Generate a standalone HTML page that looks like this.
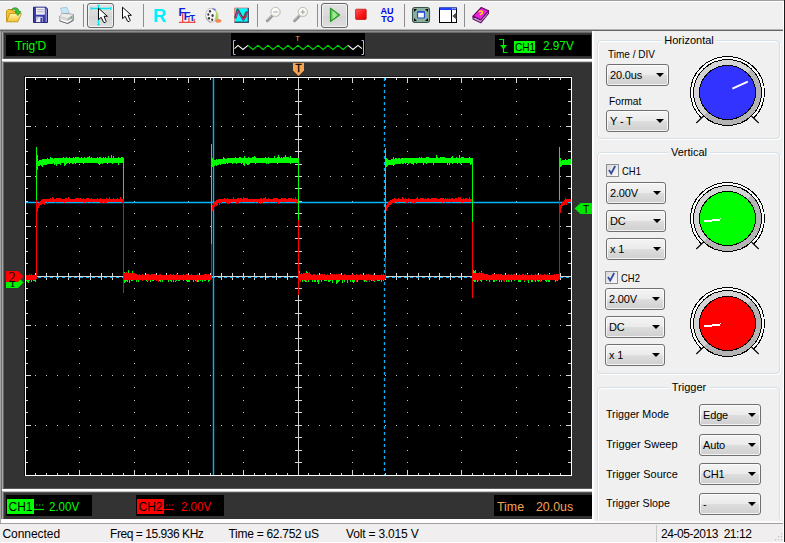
<!DOCTYPE html>
<html><head><meta charset="utf-8"><title>Oscilloscope</title>
<style>
html,body{margin:0;padding:0}
body{width:785px;height:543px;position:relative;overflow:hidden;background:#f0f0f0;font-family:"Liberation Sans", Arial, sans-serif;font-size:11px;color:#000}
div,svg,span,i{position:absolute;box-sizing:content-box}
.lb{white-space:nowrap;transform-origin:0 50%;line-height:14px}
.cb{border:1px solid #707070;border-radius:3px;background:linear-gradient(#f4f4f4 0%,#ebebeb 48%,#dddddd 52%,#cfcfcf 100%);box-shadow:inset 0 0 0 1px rgba(255,255,255,.75)}
.cb span{left:3px;top:0;bottom:0;line-height:20px;font-size:11px;white-space:nowrap}
.cb i{right:4px;top:8px;width:0;height:0;border-left:4px solid transparent;border-right:4px solid transparent;border-top:4px solid #000}
.gb{border:1px solid #d5dfe5;border-radius:4px;box-shadow:inset 1px 1px 0 #fff, 1px 1px 0 #fff}
.gbt{background:#f0f0f0;text-align:center;font-size:11px;line-height:14px;white-space:nowrap}
.bk{background:#000}
.chk{width:11px;height:11px;border:1px solid #8e8f8f;background:linear-gradient(135deg,#d8d8d8,#fafafa)}
.tb{border:1px solid #696969;border-radius:3px;background:linear-gradient(#e2e2e2,#dadada 50%,#d4d4d4 51%,#dedede);box-shadow:inset 0 0 0 1px rgba(255,255,255,.6)}
.sep{width:1px;background:#8d8d8d;top:4px;height:23px}
</style></head><body>

<div style="left:0;top:0;width:785px;height:1px;background:#a0a0a0"></div>
<div style="left:0;top:1px;width:785px;height:1px;background:#fff"></div>
<div class="tb" style="left:87px;top:3px;width:25px;height:23px"></div>
<div class="tb" style="left:321px;top:3px;width:25px;height:23px"></div>
<div class="sep" style="left:83px"></div>
<div class="sep" style="left:143px"></div>
<div class="sep" style="left:257px"></div>
<div class="sep" style="left:317px"></div>
<div class="sep" style="left:404px"></div>
<div class="sep" style="left:464px"></div>
<svg style="left:0;top:0" width="500" height="30" viewBox="0 0 500 30">
<defs>
<linearGradient id="gy" x1="0" y1="0" x2="0" y2="1"><stop offset="0" stop-color="#fff6b0"/><stop offset="1" stop-color="#f0c22c"/></linearGradient>
<linearGradient id="gr" x1="0" y1="0" x2="1" y2="1"><stop offset="0" stop-color="#ff5a5a"/><stop offset=".5" stop-color="#fa1c1c"/><stop offset="1" stop-color="#d80000"/></linearGradient>
<linearGradient id="gg" x1="0" y1="0" x2="1" y2="0"><stop offset="0" stop-color="#48c040"/><stop offset=".4" stop-color="#b0f0a0"/><stop offset="1" stop-color="#50c444"/></linearGradient>
<radialGradient id="gl" cx="0.4" cy="0.35" r="0.7"><stop offset="0" stop-color="#ffffff"/><stop offset=".7" stop-color="#f6f6f4"/><stop offset="1" stop-color="#e0e0dc"/></radialGradient>
</defs>
<path d="M6.500 21.500V11l1.500-1.500h3.500l1.500 1.500h5.500v3.500z" fill="#f1c434" stroke="#b98508" stroke-width=".8" stroke-linejoin="round"/>
<path d="M6.500 21.800l3.300-8.300h11.700l-3.700 8.300z" fill="url(#gy)" stroke="#c08c0a" stroke-width=".8" stroke-linejoin="round"/>
<path d="M11.300 9.800c2.200-3.200 7.200-2.800 7.900 1.800h1.700l-3 4-3-4h1.700c-.5-2.200-3-2.800-5.300-1.800z" fill="#3cc03c" stroke="#1c8c1c" stroke-width=".7" stroke-linejoin="round"/>
<path d="M33.500 7.200h12.300l1.700 1.600v13.700h-14z" fill="#3b3bab" stroke="#22227a" stroke-width="1" stroke-linejoin="round"/>
<path d="M45.600 8v14h1.400V9.200z" fill="#8a8ad8"/>
<rect x="36" y="7.700" width="8.800" height="7" fill="#f0f0f6"/><path d="M37.200 9.700h6.400M37.200 11.800h6.400" stroke="#a8a8b8" stroke-width=".9"/>
<path d="M36 16.800h6.600v5.300h-6.600z" fill="#f4f4fa"/><path d="M36 22.100l4-5.300h-4z" fill="#c4c4dc"/><rect x="40.400" y="17.600" width="1.800" height="4.500" fill="#3b3bab"/>
<path d="M60.600 8.100l6.100-.8 2.700 6-7.300.8z" fill="#c4e6fa" stroke="#8fb4cc" stroke-width=".6"/>
<path d="M59.500 16.300l3.200-3 10.800 1.200v5.800l-5.500 3.200-8.500-2.700z" fill="#b4b4b4" stroke="#7c7c7c" stroke-width=".7" stroke-linejoin="round"/>
<path d="M59.700 16.300l3-2.700 10.600 1.200-5.600 3.400z" fill="#ececec"/>
<path d="M59.700 16.500l8 2v4.600l-8-2.500z" fill="#d8d8d8"/>
<path d="M61.200 19.300l6 1.900 4.300-2.500v1.600l-4.300 2.600-6-2z" fill="#fff"/>
<path d="M59.800 21l8 2.500 5.500-3.200" fill="none" stroke="#6c6c6c" stroke-width=".9"/>
<circle cx="71.300" cy="17.400" r=".8" fill="#3c3"/>
<path d="M91 8.500h20M98.500 5v20" stroke="#00eaf2" stroke-width="1.300"/><path d="M91.200 7v3M110.800 7v3M97 5.300h3M97 24.600h3" stroke="#00eaf2" stroke-width="1.100"/>
<path d="M98.5 8.2V19.6L101.2 17.3L103.5 22.2Q105.2 23.6 106.2 21.5L104.0 16.3H107.4Z" fill="#fff" stroke="#000" stroke-width="0.95" stroke-linejoin="round"/>
<path d="M122.5 7.2V18.6L125.2 16.3L127.5 21.2Q129.2 22.6 130.2 20.5L128.0 15.3H131.4Z" fill="#fff" stroke="#000" stroke-width="0.95" stroke-linejoin="round"/>
<text x="153" y="21.500" font-family='Liberation Sans, Arial, sans-serif' font-weight="bold" font-size="18.500" fill="#00f0ff">R</text>
<g font-family="Liberation Sans, Arial, sans-serif" font-weight="bold" fill="#1020e0"><text x="178.500" y="16" font-size="11.500">F</text><text x="183.800" y="20.400" font-size="11">F</text><text x="189.500" y="21" font-size="9">T</text></g>
<path d="M179 22.300h16.500M182.700 22v-8.600M188.900 22v-4.200M194.200 22v-3" stroke="#f02020" stroke-width="1" fill="none"/>
<ellipse cx="211.300" cy="15.200" rx="5.600" ry="7" fill="#f6f6f6" stroke="#b4b4b4" stroke-width=".9"/><path d="M206.200 17c.5 3 2.500 5 5 5.200" stroke="#9a9a9a" stroke-width=".8" fill="none"/><g fill="#3a3a3a"><ellipse cx="210" cy="11.300" rx="1.100" ry="1.400"/><ellipse cx="208.300" cy="14.500" rx="1" ry="1.300"/><ellipse cx="212.600" cy="15.600" rx="1.100" ry="1.500"/><ellipse cx="209" cy="18.300" rx="1.100" ry="1.400"/><ellipse cx="212.200" cy="19.800" rx="1" ry="1.300"/></g><path d="M212.500 9.200c1.500-.5 2.600 .2 3 1.600" stroke="#7878d8" stroke-width="1.600" fill="none"/><path d="M215.800 10.500c2 1.500 2.800 5 2.300 8.200l-2.600 2-.6-2c1.200-2.600 1.400-5.600 .9-8.200z" fill="#a8d858" stroke="#d8c890" stroke-width=".5"/><path d="M215.200 20.200c1.500-1.600 4.300-1.800 6.300 0 .4 1.300-1 2.300-3 2.500-1.800 .2-3.300-.3-3.300-2.500z" fill="#f08858"/>
<rect x="234.500" y="8" width="14" height="14.300" fill="#00ffff"/><path d="M234.500 22.300V8H248.500" fill="none" stroke="#d88080" stroke-width=".9"/><path d="M248.300 8V22.200H234.500" fill="none" stroke="#3c5070" stroke-width="1.400"/>
<path d="M235.300 18.300L237.700 9.800L243.400 19.600L247 11.500" stroke="#2e5446" stroke-width="2.400" fill="none" stroke-linejoin="round"/><path d="M235.500 18.600L237.700 10.800L243.400 20.200L246.800 12.500" stroke="#ff30c8" stroke-width=".8" fill="none"/><path d="M245.200 12.500V18M243.900 16.300L245.200 18.300L246.500 16.300" stroke="#f01010" stroke-width="1" fill="none"/>
<path d="M271.7 16.300L267.3 20.700" stroke="#989898" stroke-width="3" stroke-linecap="round"/><path d="M271.1 16L267.1 20" stroke="#c4c4c4" stroke-width="1" stroke-linecap="round"/>
<circle cx="275.8" cy="12.300" r="5" fill="#d8d4c4" opacity=".6"/><circle cx="275.5" cy="11.900" r="4.600" fill="url(#gl)" stroke="#c4c0ae" stroke-width="1"/>
<path d="M273.3 12h4.400" stroke="#a4a4a4" stroke-width="1.100"/>
<path d="M299.0 16.300L294.6 20.700" stroke="#989898" stroke-width="3" stroke-linecap="round"/><path d="M298.4 16L294.4 20" stroke="#c4c4c4" stroke-width="1" stroke-linecap="round"/>
<circle cx="303.1" cy="12.300" r="5" fill="#d8d4c4" opacity=".6"/><circle cx="302.8" cy="11.900" r="4.600" fill="url(#gl)" stroke="#c4c0ae" stroke-width="1"/>
<path d="M300.6 12h4.400M302.8 9.800v4.400" stroke="#a4a4a4" stroke-width="1.100"/>
<path d="M330.500 8.300v13.200l9-6.600z" fill="url(#gg)" stroke="#2a9a2a" stroke-width="1.300" stroke-linejoin="round"/>
<rect x="355.600" y="9.200" width="10.600" height="10.300" rx=".8" fill="url(#gr)" stroke="#c41414" stroke-width=".8"/>
<g font-family="Liberation Sans, Arial, sans-serif" font-weight="bold" font-size="9" fill="#0000f0"><text x="380.600" y="13.500">AU</text><text x="381.200" y="22.200" letter-spacing=".2">TO</text></g>
<rect x="412.500" y="7.500" width="17" height="15" rx="2.500" fill="#8cae9e" stroke="#36564a" stroke-width="1.100"/><path d="M414 9h3l-3 3zM428 9h-3l3 3zM414 21h3l-3-3zM428 21h-3l3-3z" fill="#000"/><rect x="417.500" y="11.500" width="7" height="6.500" rx="1" fill="#f4f4ff" stroke="#2050d0" stroke-width="1.200"/><path d="M417.500 12h7" stroke="#2050d0" stroke-width="1.600"/>
<rect x="439.500" y="8" width="17" height="14.500" fill="#fff" stroke="#000" stroke-width="1"/><rect x="439.500" y="7.500" width="17" height="2.500" fill="#2040ff"/><path d="M451.500 10v12" stroke="#000" stroke-width="1"/><path d="M456.500 12.500l-4.200 3.500 4.200 3.500z" fill="#484848"/><path d="M452 8.700h4" stroke="#fff" stroke-width=".8" stroke-dasharray="1 .6"/>
<path d="M473 16.200l8.300-8.700 7.200 3.300-7.700 9.200z" fill="#f020e0" stroke="#5e0a5e" stroke-width="1.100" stroke-linejoin="round"/><path d="M473 16.200v2.900l7.800 3.700 7.700-9.300v-2.700l-7.700 9.200z" fill="#f4ecf8" stroke="#5e0a5e" stroke-width="1.100" stroke-linejoin="round"/><path d="M473.300 17.700l7.500 3.600 7.500-9" fill="none" stroke="#a040c0" stroke-width=".7"/><path d="M478.800 12.300c.6-2 3.800-1.800 3.600 .3-.1 1.100-1.700 1.200-2.300 2.400" stroke="#ffe000" stroke-width="1.500" fill="none"/>
</svg>
<div style="left:0;top:29px;width:783px;height:1px;background:#b4b4b4"></div>
<div style="left:0;top:30px;width:783px;height:1px;background:#646464"></div>
<div style="left:783px;top:1px;width:1px;height:542px;background:#fff"></div>
<div style="left:784px;top:0;width:1px;height:542px;background:#1a1a1a"></div>
<div style="left:0;top:31px;width:592px;height:488px;background:#333"></div>
<div style="left:0;top:31px;width:592px;height:1px;background:#8c8c8c"></div>
<div style="left:0;top:32px;width:592px;height:1px;background:#6a6a6a"></div>
<div style="left:0;top:31px;width:1px;height:492px;background:#a6a6a6"></div>
<div style="left:1px;top:31px;width:1px;height:490px;background:#707070"></div>
<div style="left:2px;top:32px;width:1px;height:488px;background:#a8a8a8"></div>
<div style="left:3px;top:33px;width:1px;height:486px;background:#666"></div>
<div style="left:592px;top:31px;width:2px;height:492px;background:#fff"></div>
<div style="left:3px;top:58px;width:589px;height:1px;background:#5a5a5a"></div>
<div style="left:2px;top:59px;width:591px;height:2px;background:#fff"></div>
<div style="left:3px;top:61px;width:589px;height:1px;background:#c4c4c4"></div>
<div style="left:4px;top:62px;width:588px;height:1px;background:#555"></div>
<div style="left:3px;top:488px;width:589px;height:1px;background:#5a5a5a"></div>
<div style="left:2px;top:489px;width:591px;height:2px;background:#fff"></div>
<div style="left:3px;top:491px;width:589px;height:1px;background:#c4c4c4"></div>
<div style="left:4px;top:492px;width:588px;height:1px;background:#555"></div>
<div class="bk" style="left:6px;top:35px;width:50px;height:21px"></div>
<div class="lb" style="left:15px;top:38.5px;font-size:12px;color:#00ff00;transform:scaleX(1.0);">Trig'D</div>
<div class="bk" style="left:231px;top:33px;width:134px;height:23px"></div>
<div class="bk" style="left:495px;top:35px;width:96px;height:21px"></div>
<div style="left:514px;top:41px;width:21px;height:12px;background:#00ff00"></div>
<div class="lb" style="left:515px;top:40px;font-size:11px;color:#000;transform:scaleX(0.92);">CH1</div>
<div class="lb" style="left:543px;top:39.2px;font-size:12px;color:#00ff00;transform:scaleX(0.98);">2.97V</div>
<div class="bk" style="left:6px;top:495px;width:86px;height:21px"></div>
<div style="left:7px;top:499px;width:27px;height:15px;background:#00ff00"></div>
<div class="lb" style="left:8.5px;top:499.5px;font-size:12px;color:#000;transform:scaleX(1.0);">CH1</div>
<div class="lb" style="left:48.5px;top:499.5px;font-size:12px;color:#00ff00;transform:scaleX(0.96);">2.00V</div>
<div class="bk" style="left:136px;top:495px;width:88px;height:21px"></div>
<div style="left:137px;top:499px;width:27px;height:15px;background:#ff0000"></div>
<div class="lb" style="left:138.5px;top:499.5px;font-size:12px;color:#000;transform:scaleX(1.0);">CH2</div>
<div class="lb" style="left:181px;top:499.5px;font-size:12px;color:#ff0000;transform:scaleX(0.96);">2.00V</div>
<div class="bk" style="left:494px;top:495px;width:98px;height:21px"></div>
<div class="lb" style="left:496.7px;top:499.5px;font-size:12px;color:#f5a452;transform:scaleX(1.03);">Time</div>
<div class="lb" style="left:536px;top:499.5px;font-size:12px;color:#f5a452;transform:scaleX(1.03);">20.0us</div>
<svg style="left:0;top:0" width="600" height="543" viewBox="0 0 600 543">
<rect x="25" y="77" width="547" height="399" fill="#000"/>
<path d="M35 126.5h1M35 176.5h1M35 226.5h1M35 325.5h1M35 375.5h1M35 425.5h1M46 126.5h1M46 176.5h1M46 226.5h1M46 325.5h1M46 375.5h1M46 425.5h1M57 126.5h1M57 176.5h1M57 226.5h1M57 325.5h1M57 375.5h1M57 425.5h1M68 126.5h1M68 176.5h1M68 226.5h1M68 325.5h1M68 375.5h1M68 425.5h1M79 89.5h1M79 101.5h1M79 114.5h1M79 126.5h1M79 139.5h1M79 151.5h1M79 164.5h1M79 176.5h1M79 188.5h1M79 201.5h1M79 213.5h1M79 226.5h1M79 238.5h1M79 251.5h1M79 263.5h1M79 276.5h1M79 288.5h1M79 300.5h1M79 313.5h1M79 325.5h1M79 338.5h1M79 350.5h1M79 363.5h1M79 375.5h1M79 387.5h1M79 400.5h1M79 412.5h1M79 425.5h1M79 437.5h1M79 450.5h1M79 462.5h1M90 126.5h1M90 176.5h1M90 226.5h1M90 325.5h1M90 375.5h1M90 425.5h1M101 126.5h1M101 176.5h1M101 226.5h1M101 325.5h1M101 375.5h1M101 425.5h1M112 126.5h1M112 176.5h1M112 226.5h1M112 325.5h1M112 375.5h1M112 425.5h1M123 126.5h1M123 176.5h1M123 226.5h1M123 325.5h1M123 375.5h1M123 425.5h1M134 89.5h1M134 101.5h1M134 114.5h1M134 126.5h1M134 139.5h1M134 151.5h1M134 164.5h1M134 176.5h1M134 188.5h1M134 201.5h1M134 213.5h1M134 226.5h1M134 238.5h1M134 251.5h1M134 263.5h1M134 276.5h1M134 288.5h1M134 300.5h1M134 313.5h1M134 325.5h1M134 338.5h1M134 350.5h1M134 363.5h1M134 375.5h1M134 387.5h1M134 400.5h1M134 412.5h1M134 425.5h1M134 437.5h1M134 450.5h1M134 462.5h1M145 126.5h1M145 176.5h1M145 226.5h1M145 325.5h1M145 375.5h1M145 425.5h1M156 126.5h1M156 176.5h1M156 226.5h1M156 325.5h1M156 375.5h1M156 425.5h1M166 126.5h1M166 176.5h1M166 226.5h1M166 325.5h1M166 375.5h1M166 425.5h1M177 126.5h1M177 176.5h1M177 226.5h1M177 325.5h1M177 375.5h1M177 425.5h1M188 89.5h1M188 101.5h1M188 114.5h1M188 126.5h1M188 139.5h1M188 151.5h1M188 164.5h1M188 176.5h1M188 188.5h1M188 201.5h1M188 213.5h1M188 226.5h1M188 238.5h1M188 251.5h1M188 263.5h1M188 276.5h1M188 288.5h1M188 300.5h1M188 313.5h1M188 325.5h1M188 338.5h1M188 350.5h1M188 363.5h1M188 375.5h1M188 387.5h1M188 400.5h1M188 412.5h1M188 425.5h1M188 437.5h1M188 450.5h1M188 462.5h1M199 126.5h1M199 176.5h1M199 226.5h1M199 325.5h1M199 375.5h1M199 425.5h1M210 126.5h1M210 176.5h1M210 226.5h1M210 325.5h1M210 375.5h1M210 425.5h1M221 126.5h1M221 176.5h1M221 226.5h1M221 325.5h1M221 375.5h1M221 425.5h1M232 126.5h1M232 176.5h1M232 226.5h1M232 325.5h1M232 375.5h1M232 425.5h1M243 89.5h1M243 101.5h1M243 114.5h1M243 126.5h1M243 139.5h1M243 151.5h1M243 164.5h1M243 176.5h1M243 188.5h1M243 201.5h1M243 213.5h1M243 226.5h1M243 238.5h1M243 251.5h1M243 263.5h1M243 276.5h1M243 288.5h1M243 300.5h1M243 313.5h1M243 325.5h1M243 338.5h1M243 350.5h1M243 363.5h1M243 375.5h1M243 387.5h1M243 400.5h1M243 412.5h1M243 425.5h1M243 437.5h1M243 450.5h1M243 462.5h1M254 126.5h1M254 176.5h1M254 226.5h1M254 325.5h1M254 375.5h1M254 425.5h1M265 126.5h1M265 176.5h1M265 226.5h1M265 325.5h1M265 375.5h1M265 425.5h1M276 126.5h1M276 176.5h1M276 226.5h1M276 325.5h1M276 375.5h1M276 425.5h1M287 126.5h1M287 176.5h1M287 226.5h1M287 325.5h1M287 375.5h1M287 425.5h1M298 126.5h1M298 176.5h1M298 226.5h1M298 325.5h1M298 375.5h1M298 425.5h1M308 126.5h1M308 176.5h1M308 226.5h1M308 325.5h1M308 375.5h1M308 425.5h1M319 126.5h1M319 176.5h1M319 226.5h1M319 325.5h1M319 375.5h1M319 425.5h1M330 126.5h1M330 176.5h1M330 226.5h1M330 325.5h1M330 375.5h1M330 425.5h1M341 126.5h1M341 176.5h1M341 226.5h1M341 325.5h1M341 375.5h1M341 425.5h1M352 89.5h1M352 101.5h1M352 114.5h1M352 126.5h1M352 139.5h1M352 151.5h1M352 164.5h1M352 176.5h1M352 188.5h1M352 201.5h1M352 213.5h1M352 226.5h1M352 238.5h1M352 251.5h1M352 263.5h1M352 276.5h1M352 288.5h1M352 300.5h1M352 313.5h1M352 325.5h1M352 338.5h1M352 350.5h1M352 363.5h1M352 375.5h1M352 387.5h1M352 400.5h1M352 412.5h1M352 425.5h1M352 437.5h1M352 450.5h1M352 462.5h1M363 126.5h1M363 176.5h1M363 226.5h1M363 325.5h1M363 375.5h1M363 425.5h1M374 126.5h1M374 176.5h1M374 226.5h1M374 325.5h1M374 375.5h1M374 425.5h1M385 126.5h1M385 176.5h1M385 226.5h1M385 325.5h1M385 375.5h1M385 425.5h1M396 126.5h1M396 176.5h1M396 226.5h1M396 325.5h1M396 375.5h1M396 425.5h1M407 89.5h1M407 101.5h1M407 114.5h1M407 126.5h1M407 139.5h1M407 151.5h1M407 164.5h1M407 176.5h1M407 188.5h1M407 201.5h1M407 213.5h1M407 226.5h1M407 238.5h1M407 251.5h1M407 263.5h1M407 276.5h1M407 288.5h1M407 300.5h1M407 313.5h1M407 325.5h1M407 338.5h1M407 350.5h1M407 363.5h1M407 375.5h1M407 387.5h1M407 400.5h1M407 412.5h1M407 425.5h1M407 437.5h1M407 450.5h1M407 462.5h1M418 126.5h1M418 176.5h1M418 226.5h1M418 325.5h1M418 375.5h1M418 425.5h1M429 126.5h1M429 176.5h1M429 226.5h1M429 325.5h1M429 375.5h1M429 425.5h1M439 126.5h1M439 176.5h1M439 226.5h1M439 325.5h1M439 375.5h1M439 425.5h1M450 126.5h1M450 176.5h1M450 226.5h1M450 325.5h1M450 375.5h1M450 425.5h1M461 89.5h1M461 101.5h1M461 114.5h1M461 126.5h1M461 139.5h1M461 151.5h1M461 164.5h1M461 176.5h1M461 188.5h1M461 201.5h1M461 213.5h1M461 226.5h1M461 238.5h1M461 251.5h1M461 263.5h1M461 276.5h1M461 288.5h1M461 300.5h1M461 313.5h1M461 325.5h1M461 338.5h1M461 350.5h1M461 363.5h1M461 375.5h1M461 387.5h1M461 400.5h1M461 412.5h1M461 425.5h1M461 437.5h1M461 450.5h1M461 462.5h1M472 126.5h1M472 176.5h1M472 226.5h1M472 325.5h1M472 375.5h1M472 425.5h1M483 126.5h1M483 176.5h1M483 226.5h1M483 325.5h1M483 375.5h1M483 425.5h1M494 126.5h1M494 176.5h1M494 226.5h1M494 325.5h1M494 375.5h1M494 425.5h1M505 126.5h1M505 176.5h1M505 226.5h1M505 325.5h1M505 375.5h1M505 425.5h1M516 89.5h1M516 101.5h1M516 114.5h1M516 126.5h1M516 139.5h1M516 151.5h1M516 164.5h1M516 176.5h1M516 188.5h1M516 201.5h1M516 213.5h1M516 226.5h1M516 238.5h1M516 251.5h1M516 263.5h1M516 276.5h1M516 288.5h1M516 300.5h1M516 313.5h1M516 325.5h1M516 338.5h1M516 350.5h1M516 363.5h1M516 375.5h1M516 387.5h1M516 400.5h1M516 412.5h1M516 425.5h1M516 437.5h1M516 450.5h1M516 462.5h1M527 126.5h1M527 176.5h1M527 226.5h1M527 325.5h1M527 375.5h1M527 425.5h1M538 126.5h1M538 176.5h1M538 226.5h1M538 325.5h1M538 375.5h1M538 425.5h1M549 126.5h1M549 176.5h1M549 226.5h1M549 325.5h1M549 375.5h1M549 425.5h1M560 126.5h1M560 176.5h1M560 226.5h1M560 325.5h1M560 375.5h1M560 425.5h1" stroke="#c4c4c4" stroke-width="1" fill="none" shape-rendering="crispEdges"/>
<path d="M35.5 78v2M35.5 475v-2M46.5 78v2M46.5 475v-2M57.5 78v2M57.5 475v-2M68.5 78v2M68.5 475v-2M79.5 78v5M79.5 475v-5M90.5 78v2M90.5 475v-2M101.5 78v2M101.5 475v-2M112.5 78v2M112.5 475v-2M123.5 78v2M123.5 475v-2M134.5 78v5M134.5 475v-5M145.5 78v2M145.5 475v-2M156.5 78v2M156.5 475v-2M166.5 78v2M166.5 475v-2M177.5 78v2M177.5 475v-2M188.5 78v5M188.5 475v-5M199.5 78v2M199.5 475v-2M210.5 78v2M210.5 475v-2M221.5 78v2M221.5 475v-2M232.5 78v2M232.5 475v-2M243.5 78v5M243.5 475v-5M254.5 78v2M254.5 475v-2M265.5 78v2M265.5 475v-2M276.5 78v2M276.5 475v-2M287.5 78v2M287.5 475v-2M298.5 78v5M298.5 475v-5M308.5 78v2M308.5 475v-2M319.5 78v2M319.5 475v-2M330.5 78v2M330.5 475v-2M341.5 78v2M341.5 475v-2M352.5 78v5M352.5 475v-5M363.5 78v2M363.5 475v-2M374.5 78v2M374.5 475v-2M385.5 78v2M385.5 475v-2M396.5 78v2M396.5 475v-2M407.5 78v5M407.5 475v-5M418.5 78v2M418.5 475v-2M429.5 78v2M429.5 475v-2M439.5 78v2M439.5 475v-2M450.5 78v2M450.5 475v-2M461.5 78v5M461.5 475v-5M472.5 78v2M472.5 475v-2M483.5 78v2M483.5 475v-2M494.5 78v2M494.5 475v-2M505.5 78v2M505.5 475v-2M516.5 78v5M516.5 475v-5M527.5 78v2M527.5 475v-2M538.5 78v2M538.5 475v-2M549.5 78v2M549.5 475v-2M560.5 78v2M560.5 475v-2M26 89.5h2M571 89.5h-3M26 101.5h2M571 101.5h-3M26 114.5h2M571 114.5h-3M26 126.5h5M571 126.5h-5M26 139.5h2M571 139.5h-3M26 151.5h2M571 151.5h-3M26 164.5h2M571 164.5h-3M26 176.5h5M571 176.5h-5M26 188.5h2M571 188.5h-3M26 201.5h2M571 201.5h-3M26 213.5h2M571 213.5h-3M26 226.5h5M571 226.5h-5M26 238.5h2M571 238.5h-3M26 251.5h2M571 251.5h-3M26 263.5h2M571 263.5h-3M26 276.5h5M571 276.5h-5M26 288.5h2M571 288.5h-3M26 300.5h2M571 300.5h-3M26 313.5h2M571 313.5h-3M26 325.5h5M571 325.5h-5M26 338.5h2M571 338.5h-3M26 350.5h2M571 350.5h-3M26 363.5h2M571 363.5h-3M26 375.5h5M571 375.5h-5M26 387.5h2M571 387.5h-3M26 400.5h2M571 400.5h-3M26 412.5h2M571 412.5h-3M26 425.5h5M571 425.5h-5M26 437.5h2M571 437.5h-3M26 450.5h2M571 450.5h-3M26 462.5h2M571 462.5h-3M298.5 77V475M25 276.5H571M35.5 273v7M46.5 273v7M57.5 273v7M68.5 273v7M79.5 273v7M90.5 273v7M101.5 273v7M112.5 273v7M123.5 273v7M134.5 273v7M145.5 273v7M156.5 273v7M166.5 273v7M177.5 273v7M188.5 273v7M199.5 273v7M210.5 273v7M221.5 273v7M232.5 273v7M243.5 273v7M254.5 273v7M265.5 273v7M276.5 273v7M287.5 273v7M298.5 273v7M308.5 273v7M319.5 273v7M330.5 273v7M341.5 273v7M352.5 273v7M363.5 273v7M374.5 273v7M385.5 273v7M396.5 273v7M407.5 273v7M418.5 273v7M429.5 273v7M439.5 273v7M450.5 273v7M461.5 273v7M472.5 273v7M483.5 273v7M494.5 273v7M505.5 273v7M516.5 273v7M527.5 273v7M538.5 273v7M549.5 273v7M560.5 273v7M295 89.5h7M295 101.5h7M295 114.5h7M295 126.5h7M295 139.5h7M295 151.5h7M295 164.5h7M295 176.5h7M295 188.5h7M295 201.5h7M295 213.5h7M295 226.5h7M295 238.5h7M295 251.5h7M295 263.5h7M295 276.5h7M295 288.5h7M295 300.5h7M295 313.5h7M295 325.5h7M295 338.5h7M295 350.5h7M295 363.5h7M295 375.5h7M295 387.5h7M295 400.5h7M295 412.5h7M295 425.5h7M295 437.5h7M295 450.5h7M295 462.5h7" stroke="#d4d4d4" stroke-width="1" fill="none" shape-rendering="crispEdges"/>
<path d="M24.5 476V76.5H572" fill="none" stroke="#111" stroke-width="1" shape-rendering="crispEdges"/>
<rect x="25.5" y="77.5" width="546" height="398" fill="none" stroke="#fff" stroke-width="1" shape-rendering="crispEdges"/>
<path d="M26 202.500H571" stroke="#08b4fc" stroke-width="1.400"/>
<path d="M213.500 78V475" stroke="#08b4fc" stroke-width="1.400"/>
<path d="M26 277.500H571" stroke="#08b4fc" stroke-width="1.200" stroke-dasharray="3 3"/>
<path d="M384.500 78V475" stroke="#08b4fc" stroke-width="1.300" stroke-dasharray="3 3"/>
<path d="M26.5 276V281M27.5 276V282M28.5 276V283M29.5 276V281M30.5 276V279M31.5 276V282M32.5 276V279M33.5 276V281M34.5 276V281M35.5 276V282M36.5 147V279M37.5 155V170M38.5 161V166M39.5 160V166M40.5 160V165M41.5 160V166M42.5 159V167M43.5 159V165M44.5 159V165M45.5 159V165M46.5 159V165M47.5 158V164M48.5 159V164M49.5 159V164M50.5 157V164M51.5 158V164M52.5 158V164M53.5 159V163M54.5 158V165M55.5 158V164M56.5 158V166M57.5 158V164M58.5 158V164M59.5 158V164M60.5 158V165M61.5 158V163M62.5 158V163M63.5 157V163M64.5 158V166M65.5 158V165M66.5 157V164M67.5 158V163M68.5 158V163M69.5 157V164M70.5 158V163M71.5 158V163M72.5 158V164M73.5 157V164M74.5 158V163M75.5 157V164M76.5 157V163M77.5 157V163M78.5 157V163M79.5 158V163M80.5 158V163M81.5 157V163M82.5 158V163M83.5 158V164M84.5 157V163M85.5 158V163M86.5 158V163M87.5 157V163M88.5 157V163M89.5 156V163M90.5 158V163M91.5 157V163M92.5 158V163M93.5 158V163M94.5 158V163M95.5 158V163M96.5 158V163M97.5 157V163M98.5 158V164M99.5 157V165M100.5 157V164M101.5 158V163M102.5 158V164M103.5 157V163M104.5 158V163M105.5 157V163M106.5 158V163M107.5 158V164M108.5 156V163M109.5 158V163M110.5 158V163M111.5 155V163M112.5 158V164M113.5 156V163M114.5 158V163M115.5 158V163M116.5 158V163M117.5 158V163M118.5 157V165M119.5 158V163M120.5 158V163M121.5 157V163M122.5 157V163M123.5 158V280M124.5 272V283M125.5 276V282M126.5 276V281M127.5 276V282M128.5 270V279M129.5 276V283M130.5 276V279M131.5 276V281M132.5 271V281M133.5 276V279M134.5 276V279M135.5 276V279M136.5 276V282M137.5 276V279M138.5 276V282M139.5 276V279M140.5 276V279M141.5 276V279M142.5 276V279M143.5 276V279M144.5 276V279M145.5 276V279M146.5 276V281M147.5 276V282M148.5 276V279M149.5 276V279M150.5 276V282M151.5 276V279M152.5 276V281M153.5 276V281M154.5 276V279M155.5 276V279M156.5 276V279M157.5 276V279M158.5 276V279M159.5 276V281M160.5 276V282M161.5 276V280M162.5 276V282M163.5 276V279M164.5 276V279M165.5 276V279M166.5 276V279M167.5 276V279M168.5 276V282M169.5 276V279M170.5 276V281M171.5 276V282M172.5 276V279M173.5 276V282M174.5 276V279M175.5 276V282M176.5 276V281M177.5 276V279M178.5 276V281M179.5 276V281M180.5 276V279M181.5 276V279M182.5 276V279M183.5 276V281M184.5 276V279M185.5 276V279M186.5 276V281M187.5 276V282M188.5 276V282M189.5 276V282M190.5 276V279M191.5 276V279M192.5 276V279M193.5 276V282M194.5 276V279M195.5 276V281M196.5 276V282M197.5 276V282M198.5 276V282M199.5 276V279M200.5 276V281M201.5 276V279M202.5 276V282M203.5 276V279M204.5 276V281M205.5 276V281M206.5 276V279M207.5 276V279M208.5 276V282M209.5 276V281M210.5 276V279M211.5 144V279M212.5 158V167M213.5 160V167M214.5 160V166M215.5 160V165M216.5 159V166M217.5 160V165M218.5 159V165M219.5 159V164M220.5 159V165M221.5 159V164M222.5 159V164M223.5 157V164M224.5 158V164M225.5 159V164M226.5 159V163M227.5 158V164M228.5 158V163M229.5 158V163M230.5 158V163M231.5 158V163M232.5 158V164M233.5 158V163M234.5 158V163M235.5 157V163M236.5 158V164M237.5 158V163M238.5 158V163M239.5 157V163M240.5 157V163M241.5 158V164M242.5 158V163M243.5 158V165M244.5 156V166M245.5 158V163M246.5 158V164M247.5 158V165M248.5 157V165M249.5 158V164M250.5 158V163M251.5 158V163M252.5 157V163M253.5 157V163M254.5 156V163M255.5 157V164M256.5 158V163M257.5 158V163M258.5 158V163M259.5 158V163M260.5 158V163M261.5 158V163M262.5 158V163M263.5 158V163M264.5 158V163M265.5 157V163M266.5 158V164M267.5 158V163M268.5 157V164M269.5 158V163M270.5 158V163M271.5 158V163M272.5 158V163M273.5 158V163M274.5 156V163M275.5 158V163M276.5 158V163M277.5 157V164M278.5 155V163M279.5 157V163M280.5 158V163M281.5 157V163M282.5 158V163M283.5 157V163M284.5 157V163M285.5 155V163M286.5 157V163M287.5 157V163M288.5 157V163M289.5 158V163M290.5 156V164M291.5 158V163M292.5 158V163M293.5 158V163M294.5 158V163M295.5 158V163M296.5 158V163M297.5 158V163M298.5 158V280M299.5 271V279M300.5 276V282M301.5 276V279M302.5 276V282M303.5 276V279M304.5 276V281M305.5 276V282M306.5 271V282M307.5 272V279M308.5 276V282M309.5 276V279M310.5 276V279M311.5 276V279M312.5 276V282M313.5 276V279M314.5 276V282M315.5 276V282M316.5 276V279M317.5 276V282M318.5 276V284M319.5 276V282M320.5 276V279M321.5 276V282M322.5 276V279M323.5 276V279M324.5 276V281M325.5 276V281M326.5 276V281M327.5 276V279M328.5 276V282M329.5 276V282M330.5 276V281M331.5 276V279M332.5 276V283M333.5 276V279M334.5 276V279M335.5 276V279M336.5 276V284M337.5 276V283M338.5 276V282M339.5 276V281M340.5 276V279M341.5 276V279M342.5 276V283M343.5 276V279M344.5 276V282M345.5 276V279M346.5 276V279M347.5 276V283M348.5 276V279M349.5 276V279M350.5 276V282M351.5 276V279M352.5 276V282M353.5 276V283M354.5 276V282M355.5 276V279M356.5 276V279M357.5 276V282M358.5 276V279M359.5 276V279M360.5 276V279M361.5 276V279M362.5 276V279M363.5 276V281M364.5 276V282M365.5 276V281M366.5 276V282M367.5 276V279M368.5 276V279M369.5 276V282M370.5 276V279M371.5 276V281M372.5 276V279M373.5 276V281M374.5 276V282M375.5 276V279M376.5 276V279M377.5 276V281M378.5 276V281M379.5 276V281M380.5 276V279M381.5 276V282M382.5 276V279M383.5 276V281M384.5 276V279M385.5 148V279M386.5 158V167M387.5 159V166M388.5 160V165M389.5 160V165M390.5 160V165M391.5 159V165M392.5 159V165M393.5 157V166M394.5 159V165M395.5 158V164M396.5 158V164M397.5 159V164M398.5 158V164M399.5 158V164M400.5 159V164M401.5 158V163M402.5 158V164M403.5 158V164M404.5 158V163M405.5 158V164M406.5 158V163M407.5 158V163M408.5 158V164M409.5 158V163M410.5 158V163M411.5 158V164M412.5 158V164M413.5 158V165M414.5 158V163M415.5 158V163M416.5 158V164M417.5 158V163M418.5 158V163M419.5 157V163M420.5 158V163M421.5 157V163M422.5 158V163M423.5 158V165M424.5 158V163M425.5 158V163M426.5 157V164M427.5 157V163M428.5 157V163M429.5 158V163M430.5 158V163M431.5 158V163M432.5 158V163M433.5 158V165M434.5 158V163M435.5 158V163M436.5 155V163M437.5 157V163M438.5 158V163M439.5 158V163M440.5 157V163M441.5 157V163M442.5 157V163M443.5 157V163M444.5 157V163M445.5 158V163M446.5 158V163M447.5 158V165M448.5 158V163M449.5 158V165M450.5 158V163M451.5 157V163M452.5 156V164M453.5 158V163M454.5 158V163M455.5 158V163M456.5 157V163M457.5 158V164M458.5 158V163M459.5 155V163M460.5 158V164M461.5 157V163M462.5 157V163M463.5 157V163M464.5 158V163M465.5 158V163M466.5 158V163M467.5 158V163M468.5 158V163M469.5 157V163M470.5 158V165M471.5 158V164M472.5 158V280M473.5 270V281M474.5 271V282M475.5 270V282M476.5 276V279M477.5 276V282M478.5 276V279M479.5 276V280M480.5 276V281M481.5 271V282M482.5 276V279M483.5 276V279M484.5 276V279M485.5 276V279M486.5 276V281M487.5 276V279M488.5 276V279M489.5 276V282M490.5 276V279M491.5 276V279M492.5 276V279M493.5 276V282M494.5 276V282M495.5 276V279M496.5 276V281M497.5 276V279M498.5 276V279M499.5 276V282M500.5 276V279M501.5 276V282M502.5 276V279M503.5 276V281M504.5 276V279M505.5 276V279M506.5 276V282M507.5 276V279M508.5 276V282M509.5 276V279M510.5 276V279M511.5 276V282M512.5 276V279M513.5 276V279M514.5 276V281M515.5 276V279M516.5 276V279M517.5 276V279M518.5 276V282M519.5 276V282M520.5 276V282M521.5 276V280M522.5 276V279M523.5 276V279M524.5 276V282M525.5 276V279M526.5 276V279M527.5 276V281M528.5 276V283M529.5 276V279M530.5 276V279M531.5 276V282M532.5 276V282M533.5 276V279M534.5 276V279M535.5 276V282M536.5 276V279M537.5 276V281M538.5 276V282M539.5 276V281M540.5 276V279M541.5 276V281M542.5 276V279M543.5 276V279M544.5 276V279M545.5 276V281M546.5 276V282M547.5 276V281M548.5 276V282M549.5 276V282M550.5 276V279M551.5 276V279M552.5 276V279M553.5 276V279M554.5 276V279M555.5 276V282M556.5 276V279M557.5 276V281M558.5 276V279M559.5 147V279M560.5 158V167M561.5 161V166M562.5 160V165M563.5 160V165M564.5 160V165M565.5 159V165M566.5 160V165M567.5 160V165M568.5 159V165M569.5 159V165M570.5 159V164" stroke="#00ff00" stroke-width="1" fill="none" shape-rendering="crispEdges"/>
<path d="M26.5 275V280M27.5 275V280M28.5 275V280M29.5 274V280M30.5 275V280M31.5 274V280M32.5 275V280M33.5 275V280M34.5 275V280M35.5 275V280M36.5 200V279M37.5 205V212M38.5 203V208M39.5 202V206M40.5 201V205M41.5 200V205M42.5 199V204M43.5 199V204M44.5 199V205M45.5 199V202M46.5 199V202M47.5 199V204M48.5 199V202M49.5 199V202M50.5 198V202M51.5 199V202M52.5 197V202M53.5 198V202M54.5 199V202M55.5 199V203M56.5 198V202M57.5 198V204M58.5 198V202M59.5 198V202M60.5 198V202M61.5 199V202M62.5 199V202M63.5 199V202M64.5 199V203M65.5 198V202M66.5 198V202M67.5 199V202M68.5 197V202M69.5 198V202M70.5 199V202M71.5 199V202M72.5 199V202M73.5 199V202M74.5 199V202M75.5 198V202M76.5 198V202M77.5 198V202M78.5 198V202M79.5 199V202M80.5 198V202M81.5 199V202M82.5 199V202M83.5 198V202M84.5 199V203M85.5 199V202M86.5 198V202M87.5 198V203M88.5 198V202M89.5 199V202M90.5 199V202M91.5 198V203M92.5 199V202M93.5 199V202M94.5 199V202M95.5 199V202M96.5 199V202M97.5 198V202M98.5 199V202M99.5 199V202M100.5 198V203M101.5 199V203M102.5 199V203M103.5 199V202M104.5 199V203M105.5 199V203M106.5 198V203M107.5 199V202M108.5 199V202M109.5 197V202M110.5 199V202M111.5 199V202M112.5 199V202M113.5 198V202M114.5 199V202M115.5 199V202M116.5 199V202M117.5 198V202M118.5 199V202M119.5 199V202M120.5 197V202M121.5 199V202M122.5 199V203M123.5 199V293M124.5 273V280M125.5 273V280M126.5 272V280M127.5 273V280M128.5 273V280M129.5 273V280M130.5 273V280M131.5 273V280M132.5 273V280M133.5 273V280M134.5 273V280M135.5 274V280M136.5 274V280M137.5 275V280M138.5 275V280M139.5 274V280M140.5 275V280M141.5 275V280M142.5 274V281M143.5 275V280M144.5 275V280M145.5 275V280M146.5 274V280M147.5 274V281M148.5 274V281M149.5 275V280M150.5 275V280M151.5 274V280M152.5 274V280M153.5 274V280M154.5 274V280M155.5 274V280M156.5 275V281M157.5 275V280M158.5 275V282M159.5 274V280M160.5 274V280M161.5 275V280M162.5 275V280M163.5 275V280M164.5 275V280M165.5 275V280M166.5 275V280M167.5 275V280M168.5 275V280M169.5 275V280M170.5 274V280M171.5 275V280M172.5 275V280M173.5 274V280M174.5 275V280M175.5 275V281M176.5 274V280M177.5 274V280M178.5 275V280M179.5 275V280M180.5 275V280M181.5 275V280M182.5 275V280M183.5 274V280M184.5 275V280M185.5 275V280M186.5 274V280M187.5 274V280M188.5 275V280M189.5 275V280M190.5 275V280M191.5 274V280M192.5 275V280M193.5 275V280M194.5 275V280M195.5 275V280M196.5 275V282M197.5 274V280M198.5 275V280M199.5 275V280M200.5 275V280M201.5 275V280M202.5 275V280M203.5 275V280M204.5 274V280M205.5 274V280M206.5 274V280M207.5 275V280M208.5 274V280M209.5 275V280M210.5 275V280M211.5 244V279M212.5 205V211M213.5 203V210M214.5 202V207M215.5 201V205M216.5 200V206M217.5 200V205M218.5 199V203M219.5 199V205M220.5 199V203M221.5 199V204M222.5 199V202M223.5 199V202M224.5 198V202M225.5 199V202M226.5 199V203M227.5 198V204M228.5 199V204M229.5 199V202M230.5 199V203M231.5 199V202M232.5 199V202M233.5 197V202M234.5 199V202M235.5 199V202M236.5 199V204M237.5 198V203M238.5 198V203M239.5 199V202M240.5 198V202M241.5 198V203M242.5 199V202M243.5 197V202M244.5 198V202M245.5 198V202M246.5 198V202M247.5 198V202M248.5 199V202M249.5 199V202M250.5 199V202M251.5 199V202M252.5 199V202M253.5 199V202M254.5 199V202M255.5 199V203M256.5 199V202M257.5 199V202M258.5 199V203M259.5 199V202M260.5 198V204M261.5 198V202M262.5 199V203M263.5 198V202M264.5 198V202M265.5 197V202M266.5 199V202M267.5 199V202M268.5 198V202M269.5 199V203M270.5 199V202M271.5 199V202M272.5 199V202M273.5 198V202M274.5 198V202M275.5 198V203M276.5 198V202M277.5 198V203M278.5 199V204M279.5 199V202M280.5 199V202M281.5 198V202M282.5 198V202M283.5 199V204M284.5 198V202M285.5 198V202M286.5 199V202M287.5 199V202M288.5 198V202M289.5 198V202M290.5 198V202M291.5 198V202M292.5 199V202M293.5 198V202M294.5 199V202M295.5 197V202M296.5 199V203M297.5 199V202M298.5 220V295M299.5 273V280M300.5 274V282M301.5 273V280M302.5 274V280M303.5 273V280M304.5 273V280M305.5 273V280M306.5 273V281M307.5 273V280M308.5 273V280M309.5 272V280M310.5 274V280M311.5 275V280M312.5 275V280M313.5 274V280M314.5 274V280M315.5 275V280M316.5 275V280M317.5 274V280M318.5 275V280M319.5 275V282M320.5 274V280M321.5 274V280M322.5 274V280M323.5 275V280M324.5 274V280M325.5 275V280M326.5 275V280M327.5 274V280M328.5 275V280M329.5 275V280M330.5 274V280M331.5 274V280M332.5 274V280M333.5 275V280M334.5 274V280M335.5 275V280M336.5 274V280M337.5 275V280M338.5 274V280M339.5 274V280M340.5 274V280M341.5 275V280M342.5 275V280M343.5 275V280M344.5 274V280M345.5 275V280M346.5 275V280M347.5 275V280M348.5 275V280M349.5 275V280M350.5 275V280M351.5 275V280M352.5 274V280M353.5 274V280M354.5 275V280M355.5 275V280M356.5 274V282M357.5 275V280M358.5 275V280M359.5 275V280M360.5 274V280M361.5 275V280M362.5 275V280M363.5 275V281M364.5 275V280M365.5 275V280M366.5 274V281M367.5 275V280M368.5 274V280M369.5 275V282M370.5 275V280M371.5 275V280M372.5 275V281M373.5 274V280M374.5 275V281M375.5 275V280M376.5 275V280M377.5 275V280M378.5 275V280M379.5 275V280M380.5 275V280M381.5 274V280M382.5 275V280M383.5 274V280M384.5 275V280M385.5 258V279M386.5 205V211M387.5 203V208M388.5 202V207M389.5 201V205M390.5 200V205M391.5 200V204M392.5 199V203M393.5 199V203M394.5 198V203M395.5 199V202M396.5 199V202M397.5 199V204M398.5 198V202M399.5 199V202M400.5 199V202M401.5 199V202M402.5 197V202M403.5 198V202M404.5 199V202M405.5 198V202M406.5 199V203M407.5 199V203M408.5 198V202M409.5 199V203M410.5 199V202M411.5 199V202M412.5 199V203M413.5 199V202M414.5 199V203M415.5 199V204M416.5 198V202M417.5 197V202M418.5 199V202M419.5 199V202M420.5 198V202M421.5 198V202M422.5 198V202M423.5 198V202M424.5 199V202M425.5 198V202M426.5 199V202M427.5 198V202M428.5 198V202M429.5 199V202M430.5 199V202M431.5 198V202M432.5 198V202M433.5 198V202M434.5 198V202M435.5 198V202M436.5 198V202M437.5 199V202M438.5 199V202M439.5 199V202M440.5 198V202M441.5 198V202M442.5 198V203M443.5 198V202M444.5 199V202M445.5 198V203M446.5 199V202M447.5 198V202M448.5 199V202M449.5 198V202M450.5 199V202M451.5 198V203M452.5 198V202M453.5 199V202M454.5 199V202M455.5 198V202M456.5 198V202M457.5 199V202M458.5 197V202M459.5 198V202M460.5 197V202M461.5 199V202M462.5 199V203M463.5 198V202M464.5 199V202M465.5 198V202M466.5 198V202M467.5 199V202M468.5 199V202M469.5 197V202M470.5 199V202M471.5 199V203M472.5 222V298M473.5 273V280M474.5 273V280M475.5 273V280M476.5 273V280M477.5 273V280M478.5 273V281M479.5 272V280M480.5 273V280M481.5 272V280M482.5 273V280M483.5 273V280M484.5 274V280M485.5 274V280M486.5 274V280M487.5 274V280M488.5 275V280M489.5 275V280M490.5 275V280M491.5 275V280M492.5 274V280M493.5 274V280M494.5 274V280M495.5 275V280M496.5 274V280M497.5 275V280M498.5 274V280M499.5 275V280M500.5 274V280M501.5 274V280M502.5 275V280M503.5 275V281M504.5 275V282M505.5 275V280M506.5 275V280M507.5 275V280M508.5 274V280M509.5 275V282M510.5 275V280M511.5 274V280M512.5 275V280M513.5 274V280M514.5 274V280M515.5 275V280M516.5 275V280M517.5 275V280M518.5 275V280M519.5 274V280M520.5 275V280M521.5 275V280M522.5 274V280M523.5 274V280M524.5 275V281M525.5 274V280M526.5 275V280M527.5 274V281M528.5 275V280M529.5 275V280M530.5 275V280M531.5 274V280M532.5 275V280M533.5 275V280M534.5 275V281M535.5 274V280M536.5 275V280M537.5 274V280M538.5 275V280M539.5 275V280M540.5 274V282M541.5 275V280M542.5 275V280M543.5 275V280M544.5 274V280M545.5 275V280M546.5 275V280M547.5 274V281M548.5 275V280M549.5 274V280M550.5 275V280M551.5 275V280M552.5 275V280M553.5 275V280M554.5 274V280M555.5 275V280M556.5 274V281M557.5 274V280M558.5 274V280M559.5 200V279M560.5 205V213M561.5 203V208M562.5 202V206M563.5 201V205M564.5 200V205M565.5 198V203M566.5 199V205M567.5 199V203M568.5 199V202M569.5 199V202M570.5 199V202" stroke="#ff0000" stroke-width="1" fill="none" shape-rendering="crispEdges"/>
<polyline points="234.5,48.6 238.0,45.4 243.0,49.5 248.0,45.4" fill="none" stroke="#fff" stroke-width="1.1"/>
<polyline points="248.0,45.4 253.0,49.5 258.0,45.4 263.0,49.5 268.0,45.4 273.0,49.5 278.0,45.4 283.0,49.5 288.0,45.4 293.0,49.5 298.0,45.4 303.0,49.5 308.0,45.4 313.0,49.5 318.0,45.4 323.0,49.5 328.0,45.4 333.0,49.5 338.0,45.4 343.0,49.5 348.0,45.4" fill="none" stroke="#00e000" stroke-width="1.1"/>
<polyline points="348.0,45.4 353.0,49.5 358.0,45.4 362.0,48.7" fill="none" stroke="#fff" stroke-width="1.1"/>
<path d="M235.500 40.500h-2v14h2M361.500 40.500h2v14h-2" fill="none" stroke="#a8b8ff" stroke-width="1"/>
<text x="297.500" y="41" font-size="7.500" text-anchor="middle" fill="#f5a452" font-family="Liberation Sans, Arial, sans-serif">T</text>
<path d="M293 63h11v7.500l-5.500 5.500-5.500-5.500z" fill="#f5a452"/>
<text x="298.500" y="71.700" font-size="10" text-anchor="middle" fill="#000" stroke="#000" stroke-width=".3" font-family="Liberation Sans, Arial, sans-serif">T</text>
<path d="M574.500 208.500l6-5.500h11.500v11h-11.500z" fill="#00e800"/>
<text x="586" y="212.500" font-size="10" text-anchor="middle" fill="#000" font-family="Liberation Sans, Arial, sans-serif">T</text>
<path d="M6 277h12l5.500 5.500-5.500 5.500h-12z" fill="#00f000"/>
<text x="12.500" y="287.300" font-size="12" text-anchor="middle" fill="#000" font-family="Liberation Serif, serif">1</text>
<path d="M6 271h12l5.500 5.500-5.500 5.500h-12z" fill="#ff0000"/>
<text x="12" y="281.500" font-size="14" text-anchor="middle" fill="#000" font-family="Liberation Serif, serif">2</text>
<path d="M499 39.500h4.500v13h4" fill="none" stroke="#00e800" stroke-width="1.200"/><path d="M500 45h7l-3.500 4.500z" fill="#00e800"/>
<path d="M34 509.500h10" stroke="#00e800" stroke-width="1.200"/><path d="M36 505h8.500" stroke="#00e800" stroke-width="1" stroke-dasharray="1.500 1.500"/>
<path d="M164 509.500h10" stroke="#ff0000" stroke-width="1.200"/><path d="M166 505h8.500" stroke="#ff0000" stroke-width="1" stroke-dasharray="1.500 1.500"/>
</svg>
<div class="gb" style="left:597px;top:40px;width:181px;height:97px"></div><div class="gbt" style="left:662px;top:33px;width:54px">Horizontal</div>
<div class="gb" style="left:597px;top:152px;width:181px;height:220px"></div><div class="gbt" style="left:668px;top:145px;width:42px">Vertical</div>
<div class="gb" style="left:597px;top:387px;width:181px;height:142px"></div><div class="gbt" style="left:669px;top:380px;width:40px">Trigger</div>
<div class="lb" style="left:608px;top:47px;font-size:11px;color:#000;transform:scaleX(0.91);">Time / DIV</div>
<div class="cb" style="left:606px;top:64px;width:61px;height:20px"><span style="letter-spacing:-0.15px">20.0us</span><i></i></div>
<div class="lb" style="left:609px;top:94px;font-size:11px;color:#000;transform:scaleX(0.93);">Format</div>
<div class="cb" style="left:606px;top:110px;width:61px;height:20px"><span style="letter-spacing:-0.15px">Y - T</span><i></i></div>
<div class="chk" style="left:606px;top:164px"></div>
<div class="lb" style="left:622px;top:163.5px;font-size:11px;color:#000;transform:scaleX(0.86);">CH1</div>
<div class="cb" style="left:606px;top:182px;width:58px;height:20px"><span style="letter-spacing:-0.15px">2.00V</span><i></i></div>
<div class="cb" style="left:606px;top:210px;width:58px;height:20px"><span style="letter-spacing:-0.15px">DC</span><i></i></div>
<div class="cb" style="left:606px;top:238px;width:58px;height:20px"><span style="letter-spacing:-0.15px">x 1</span><i></i></div>
<div class="chk" style="left:605px;top:271px"></div>
<div class="lb" style="left:621px;top:270.5px;font-size:11px;color:#000;transform:scaleX(0.86);">CH2</div>
<div class="cb" style="left:605px;top:288px;width:58px;height:20px"><span style="letter-spacing:-0.15px">2.00V</span><i></i></div>
<div class="cb" style="left:605px;top:316px;width:58px;height:20px"><span style="letter-spacing:-0.15px">DC</span><i></i></div>
<div class="cb" style="left:605px;top:344px;width:58px;height:20px"><span style="letter-spacing:-0.15px">x 1</span><i></i></div>
<div class="lb" style="left:606px;top:407px;font-size:11px;color:#000;transform:scaleX(0.97);">Trigger Mode</div>
<div class="cb" style="left:699px;top:404px;width:60px;height:20px"><span style="letter-spacing:-0.15px">Edge</span><i></i></div>
<div class="lb" style="left:606px;top:437px;font-size:11px;color:#000;transform:scaleX(1.008);">Trigger Sweep</div>
<div class="cb" style="left:699px;top:434px;width:60px;height:20px"><span style="letter-spacing:-0.15px">Auto</span><i></i></div>
<div class="lb" style="left:606px;top:466.5px;font-size:11px;color:#000;transform:scaleX(0.994);">Trigger Source</div>
<div class="cb" style="left:699px;top:463px;width:60px;height:20px"><span style="letter-spacing:-0.15px">CH1</span><i></i></div>
<div class="lb" style="left:606px;top:496px;font-size:11px;color:#000;transform:scaleX(0.975);">Trigger Slope</div>
<div class="cb" style="left:699px;top:493px;width:60px;height:20px"><span style="letter-spacing:-0.15px">-</span><i></i></div>
<svg style="left:600px;top:40px" width="185" height="340" viewBox="600 40 185 340">
<g shape-rendering="crispEdges">
<path d="M702.40 116.90A35.50 34.50 0 1 1 752.60 116.90" fill="none" stroke="#fff" stroke-width="3"/>
<path d="M701.34 117.96A37.00 36.00 0 1 1 753.66 117.96" fill="none" stroke="#000" stroke-width="1"/>
<ellipse cx="727.5" cy="92.5" rx="34" ry="33" fill="#d4d4d4"/>
<path d="M751.54 69.17A34 33 0 0 1 703.46 115.83L727.5 92.5Z" fill="#b4b4b4"/>
<ellipse cx="727.5" cy="92.5" rx="34" ry="33" fill="none" stroke="#000" stroke-width="1"/>
<ellipse cx="727.5" cy="92.5" rx="28" ry="27" fill="#3333ff" stroke="#000" stroke-width="1"/>
</g>
<path d="M703.5 116.0L696.3 123.0M751.5 116.0L758.7 123.0" stroke="#000" stroke-width="1.1" fill="none"/>
<path d="M732.4 88.7L747.8 81.7" stroke="#fff" stroke-width="2" fill="none"/>
<g shape-rendering="crispEdges">
<path d="M702.40 242.90A35.50 34.50 0 1 1 752.60 242.90" fill="none" stroke="#fff" stroke-width="3"/>
<path d="M701.34 243.96A37.00 36.00 0 1 1 753.66 243.96" fill="none" stroke="#000" stroke-width="1"/>
<ellipse cx="727.5" cy="218.5" rx="34" ry="33" fill="#d4d4d4"/>
<path d="M751.54 195.17A34 33 0 0 1 703.46 241.83L727.5 218.5Z" fill="#b4b4b4"/>
<ellipse cx="727.5" cy="218.5" rx="34" ry="33" fill="none" stroke="#000" stroke-width="1"/>
<ellipse cx="727.5" cy="218.5" rx="28" ry="27" fill="#00ff00" stroke="#000" stroke-width="1"/>
</g>
<path d="M703.5 242.0L696.3 249.0M751.5 242.0L758.7 249.0" stroke="#000" stroke-width="1.1" fill="none"/>
<path d="M704 220h8v2h-8zM712 219h8v2h-8zM720 218h1v1h-1z" fill="#fff" shape-rendering="crispEdges"/>
<g shape-rendering="crispEdges">
<path d="M702.40 347.90A35.50 34.50 0 1 1 752.60 347.90" fill="none" stroke="#fff" stroke-width="3"/>
<path d="M701.34 348.96A37.00 36.00 0 1 1 753.66 348.96" fill="none" stroke="#000" stroke-width="1"/>
<ellipse cx="727.5" cy="323.5" rx="34" ry="33" fill="#d4d4d4"/>
<path d="M751.54 300.17A34 33 0 0 1 703.46 346.83L727.5 323.5Z" fill="#b4b4b4"/>
<ellipse cx="727.5" cy="323.5" rx="34" ry="33" fill="none" stroke="#000" stroke-width="1"/>
<ellipse cx="727.5" cy="323.5" rx="28" ry="27" fill="#ff0000" stroke="#000" stroke-width="1"/>
</g>
<path d="M703.5 347.0L696.3 354.0M751.5 347.0L758.7 354.0" stroke="#000" stroke-width="1.1" fill="none"/>
<path d="M704 325h8v2h-8zM712 324h8v2h-8zM720 323h1v1h-1z" fill="#fff" shape-rendering="crispEdges"/>
<path d="M609.0 170.0l2.200 3.500 4-7.500" fill="none" stroke="#3a4aa0" stroke-width="1.800"/>
<path d="M608.0 277.0l2.200 3.500 4-7.500" fill="none" stroke="#3a4aa0" stroke-width="1.800"/>
</svg>
<div style="left:1px;top:519px;width:593px;height:4px;background:#fff"></div>
<div style="left:594px;top:519px;width:189px;height:2px;background:#f0f0f0"></div>
<div style="left:594px;top:521px;width:189px;height:2px;background:#fbfbfb"></div>
<div style="left:0;top:523px;width:783px;height:1px;background:#a0a0a0"></div>
<div style="left:0;top:524px;width:783px;height:19px;background:#f0eeee"></div>
<div style="left:656px;top:525px;width:1px;height:17px;background:#c8c8c8"></div>
<div class="lb" style="left:2.5px;top:527px;font-size:12px;letter-spacing:-0.05px;line-height:15px">Connected</div>
<div class="lb" style="left:110px;top:527px;font-size:12px;letter-spacing:-0.45px;line-height:15px">Freq = 15.936 KHz</div>
<div class="lb" style="left:228.5px;top:527px;font-size:12px;letter-spacing:-0.28px;line-height:15px">Time = 62.752 uS</div>
<div class="lb" style="left:346px;top:527px;font-size:12px;letter-spacing:-0.18px;line-height:15px">Volt = 3.015 V</div>
<div class="lb" style="left:661px;top:527px;font-size:12px;letter-spacing:-0.45px;line-height:15px">24-05-2013&nbsp; 21:12</div>
<svg style="left:0;top:0" width="785" height="543" viewBox="0 0 785 543"><rect x="781" y="533" width="2" height="2" fill="#fff"/><rect x="781" y="533" width="1.500" height="1.500" fill="#c4c4c4"/><rect x="778" y="536" width="2" height="2" fill="#fff"/><rect x="778" y="536" width="1.500" height="1.500" fill="#c4c4c4"/><rect x="781" y="536" width="2" height="2" fill="#fff"/><rect x="781" y="536" width="1.500" height="1.500" fill="#c4c4c4"/><rect x="775" y="539" width="2" height="2" fill="#fff"/><rect x="775" y="539" width="1.500" height="1.500" fill="#c4c4c4"/><rect x="778" y="539" width="2" height="2" fill="#fff"/><rect x="778" y="539" width="1.500" height="1.500" fill="#c4c4c4"/><rect x="781" y="539" width="2" height="2" fill="#fff"/><rect x="781" y="539" width="1.500" height="1.500" fill="#c4c4c4"/></svg>
<div style="left:0;top:542px;width:785px;height:1px;background:#fff"></div>
</body></html>
